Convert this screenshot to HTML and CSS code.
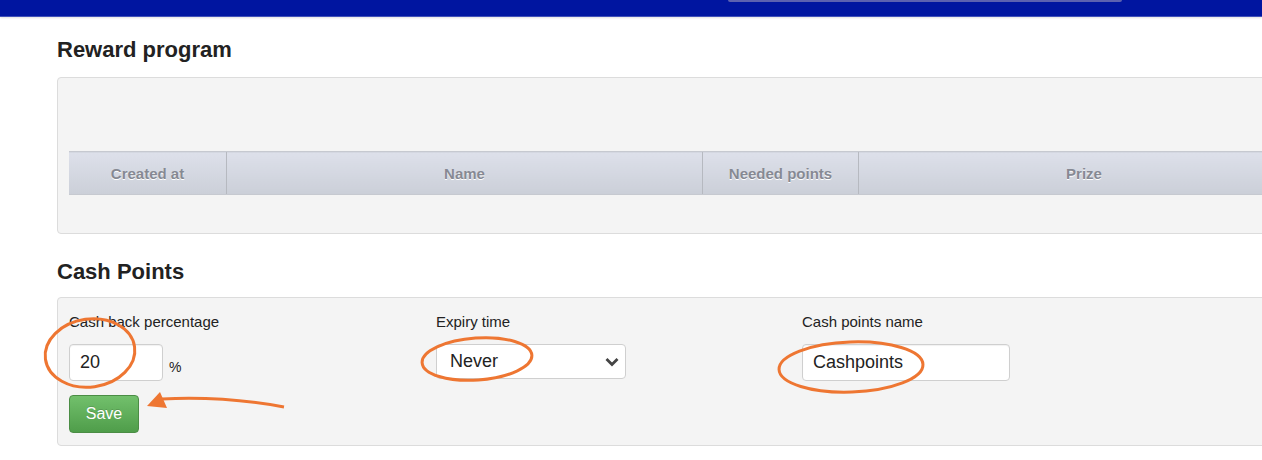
FILE: index.html
```html
<!DOCTYPE html>
<html lang="en">
<head>
    <meta charset="UTF-8">
    <title>Reward program</title>
    <link rel="stylesheet" href="styles.css">
</head>
<body>
    <header class="topbar">
        <div class="search-box"></div>
    </header>

    <main class="content">
        <h2 class="section-title">Reward program</h2>
        <div class="panel reward-panel">
            <table class="grid-table">
                <thead>
                    <tr>
                        <th class="col-created">Created at</th>
                        <th class="col-name">Name</th>
                        <th class="col-points">Needed points</th>
                        <th class="col-prize">Prize</th>
                    </tr>
                </thead>
            </table>
        </div>

        <h2 class="section-title">Cash Points</h2>
        <div class="panel cash-panel">
            <div class="fields">
                <div class="field">
                    <label>Cash back percentage</label>
                    <div class="with-unit">
                        <input class="text-input percent-input" type="text" value="20">
                        <span class="unit">%</span>
                    </div>
                    <button class="btn-save">Save</button>
                </div>
                <div class="field">
                    <label>Expiry time</label>
                    <div class="select-box">
                        <span>Never</span>
                        <svg class="chevron" width="14" height="10" viewBox="0 0 14 10">
                            <path d="M1.5 2 L7 7.5 L12.5 2" fill="none" stroke="#444" stroke-width="2.8"/>
                        </svg>
                    </div>
                </div>
                <div class="field">
                    <label>Cash points name</label>
                    <input class="text-input name-input" type="text" value="Cashpoints">
                </div>
            </div>
        </div>
    </main>

    <!-- hand drawn annotations on top of the screenshot -->
    <svg class="annotations" width="1262" height="460" viewBox="0 0 1262 460">
        <g fill="none" stroke="#ee7632" stroke-width="3">
            <ellipse cx="90" cy="353" rx="45" ry="34" transform="rotate(-8 90 353)"/>
            <ellipse cx="477" cy="359" rx="55" ry="21" transform="rotate(-4 477 359)"/>
            <ellipse cx="851" cy="367" rx="72" ry="25" transform="rotate(-2 851 367)"/>
            <path d="M284 407 Q225 396 162 399"/>
        </g>
        <path d="M147 406 L160 392 L167 408 Z" fill="#ee7632"/>
    </svg>
</body>
</html>
```

FILE: styles.css
```css
body {
    margin: 0;
    font-family: "Liberation Sans", Arial, sans-serif;
    color: #222;
    background: #fff;
    overflow: hidden;
    width: 1262px;
    height: 460px;
    position: relative;
}

.topbar {
    height: 16px;
    background: #0015a0;
    border-top: 1px solid #001080;
    border-bottom: 1px solid #4050b8;
    box-shadow: 0 1px 2px rgba(0,0,0,0.12);
    display: flex;
    margin-top: -1px;
}

.search-box {
    margin-left: 728px;
    width: 394px;
    height: 2px;
    background: #5c61b0;
    border-radius: 0 0 3px 3px;
}

.content {
    padding-left: 57px;
    width: 1240px;
}

.section-title {
    font-size: 22px;
    font-weight: bold;
    line-height: 26px;
    margin: 20px 0 14px;
    color: #222;
}

.reward-panel + .section-title {
    margin-top: 25px;
    margin-bottom: 12px;
}

.panel {
    background: #f4f4f4;
    border: 1px solid #dcdcdc;
    border-radius: 4px;
}

.reward-panel {
    padding: 73px 0 38px 11px;
}

.grid-table {
    border-collapse: collapse;
    width: 1240px;
}

.grid-table th {
    height: 42px;
    padding: 0;
    font-size: 15px;
    font-weight: bold;
    color: #868993;
    text-shadow: 0 1px 0 #fff;
    background: linear-gradient(to bottom, #dde0ea, #cbcfd8);
    border-top: 1px solid #c6c9d0;
    border-bottom: 1px solid #c6c9d0;
    border-left: 1px solid #b6b9c0;
    text-align: center;
}

.grid-table th:first-child {
    border-left: none;
}

.col-created { width: 157px; }
.col-name { width: 475px; }
.col-points { width: 155px; }

.cash-panel {
    padding: 15px 11px 12px;
}

.fields {
    display: grid;
    grid-template-columns: 367px 366px 366px;
}

.field label {
    display: block;
    font-size: 15px;
    line-height: 18px;
    color: #222;
    margin-bottom: 13px;
}

.with-unit {
    display: flex;
    align-items: flex-end;
    gap: 6px;
}

.unit {
    font-size: 14px;
    margin-bottom: 6px;
}

.text-input {
    box-sizing: border-box;
    height: 37px;
    border: 1px solid #cfcfcf;
    border-radius: 4px;
    background: #fff;
    box-shadow: inset 0 1px 1px rgba(0,0,0,0.06);
    font-family: "Liberation Sans", Arial, sans-serif;
    font-size: 18px;
    color: #222;
    padding: 0 10px;
    margin: 0;
    display: block;
}

.percent-input {
    width: 94px;
}

.name-input {
    width: 208px;
}

.select-box {
    box-sizing: border-box;
    width: 190px;
    height: 35px;
    border: 1px solid #cfcfcf;
    border-radius: 4px;
    background: #fff;
    display: flex;
    align-items: center;
    justify-content: space-between;
    padding: 0 6px 0 13px;
    font-size: 18px;
    color: #222;
}

.btn-save {
    margin-top: 14px;
    width: 70px;
    height: 38px;
    border: 1px solid #4b8d45;
    border-radius: 4px;
    background: linear-gradient(to bottom, #72c06c, #4f9d4a);
    color: #fff;
    font-family: "Liberation Sans", Arial, sans-serif;
    font-size: 16px;
    text-shadow: 0 -1px 0 rgba(0,0,0,0.15);
    padding: 0;
    display: block;
}

.annotations {
    position: absolute;
    left: 0;
    top: 0;
    pointer-events: none;
}
```
